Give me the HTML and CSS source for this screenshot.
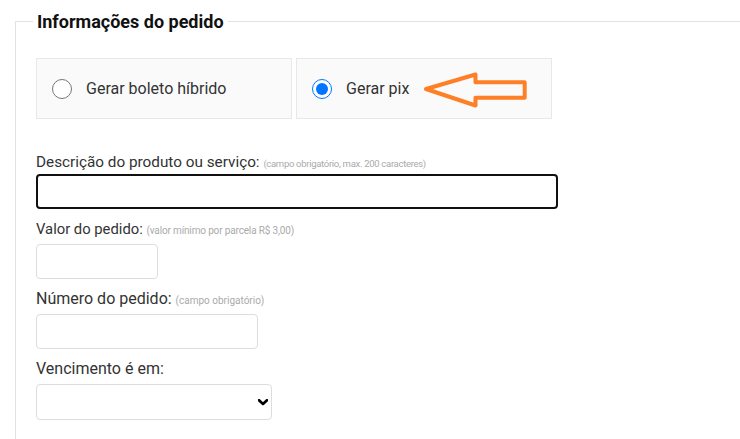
FILE: index.html
```html
<!DOCTYPE html>
<html lang="pt-BR">
<head>
<meta charset="utf-8">
<title>Informações do pedido</title>
<link rel="stylesheet" href="styles.css">
</head>
<body>
<fieldset class="order">
  <legend class="order-title">Informações do pedido</legend>

  <div class="choices">
    <label class="choice">
      <input class="choice-radio" type="radio" name="tipo">
      <span class="choice-text">Gerar boleto híbrido</span>
    </label>
    <label class="choice">
      <input class="choice-radio" type="radio" name="tipo" checked>
      <span class="choice-text">Gerar pix</span>
      <svg class="arrow" width="116" height="44" viewBox="0 0 116 44" aria-hidden="true">
        <polygon points="10,21 59.5,6.5 59.5,14.3 108.7,14.3 108.7,29.7 59.5,29.7 59.5,37.5" fill="none" stroke="#ff7f27" stroke-width="4" stroke-linejoin="round"/>
      </svg>
    </label>
  </div>

  <label class="field-label first narrow" for="desc">Descrição do produto ou serviço: <small class="hint">(campo obrigatório, max. 200 caracteres)</small></label>
  <input class="text-input focused wide" id="desc" type="text">

  <label class="field-label narrower" for="valor">Valor do pedido: <small class="hint loose">(valor mínimo por parcela R$ 3,00)</small></label>
  <input class="text-input small-w" id="valor" type="text">

  <label class="field-label" for="numero">Número do pedido: <small class="hint plain">(campo obrigatório)</small></label>
  <input class="text-input mid-w" id="numero" type="text">

  <label class="field-label" for="venc">Vencimento é em:</label>
  <div class="select-wrap">
    <select class="select-input" id="venc">
      <option></option>
    </select>
    <svg class="chevron" width="10" height="7" viewBox="0 0 10 7" aria-hidden="true">
      <polyline points="1,1.2 5,5 9,1.2" fill="none" stroke="#000" stroke-width="2.6" stroke-linecap="round" stroke-linejoin="round"/>
    </svg>
  </div>
</fieldset>
</body>
</html>
```

FILE: styles.css
```css
html {
  overflow: hidden;
}

body {
  margin: 0;
  background: #ffffff;
  font-family: Roboto, "Liberation Sans", Arial, sans-serif;
  color: #333333;
}

.order {
  margin: 11px -30px 0 15px;
  padding: 0 0 60px 20px;
  border: 1px solid #e2e2e2;
  min-width: 0;
}

.order-title {
  margin-left: -3px;
  padding: 0 4px;
  font-size: 18px;
  font-weight: 700;
  line-height: 21px;
  color: #111111;
}

.choices {
  display: flex;
  gap: 4px;
  margin-top: 26px;
}

.choice {
  position: relative;
  box-sizing: border-box;
  width: 256px;
  height: 61px;
  display: flex;
  align-items: center;
  padding-left: 15px;
  background: #fafafa;
  border: 1px solid #e8e8e8;
  cursor: pointer;
}

.choice-radio {
  width: 20px;
  height: 20px;
  margin: 0 14px 0 0;
  flex: none;
}

.choice-text {
  font-size: 16px;
  color: #333333;
}

.arrow {
  position: absolute;
  left: 119px;
  top: 9px;
}

.field-label {
  display: block;
  margin: 10px 0 5px;
  font-size: 16px;
  line-height: 20px;
  color: #333333;
}

.field-label.first {
  margin: 33px 0 2px;
}

.field-label.narrow {
  font-size: 15.3px;
}

.field-label.narrower {
  font-size: 14.8px;
}

.hint {
  font-size: 9.5px;
  line-height: 1;
  letter-spacing: -0.3px;
  color: #aaaaaa;
}

.hint.loose {
  font-size: 10px;
  letter-spacing: -0.15px;
}

.hint.plain {
  font-size: 10px;
  letter-spacing: 0;
}

.text-input {
  display: block;
  box-sizing: border-box;
  height: 35px;
  margin: 0;
  padding: 0 10px;
  border: 1px solid #dddddd;
  border-radius: 4px;
  background: #ffffff;
  font: inherit;
}

.text-input.focused {
  border: 2px solid #101010;
}

.wide {
  width: 522px;
}

.small-w {
  width: 122px;
}

.mid-w {
  width: 222px;
}

.select-wrap {
  position: relative;
  width: 236px;
}

.select-input {
  display: block;
  box-sizing: border-box;
  width: 236px;
  height: 36px;
  margin: 0;
  padding: 0 10px;
  border: 1px solid #dddddd;
  border-radius: 4px;
  background: #ffffff;
  -webkit-appearance: none;
  appearance: none;
  font: inherit;
}

.chevron {
  position: absolute;
  left: 222px;
  top: 15px;
  pointer-events: none;
}
```
